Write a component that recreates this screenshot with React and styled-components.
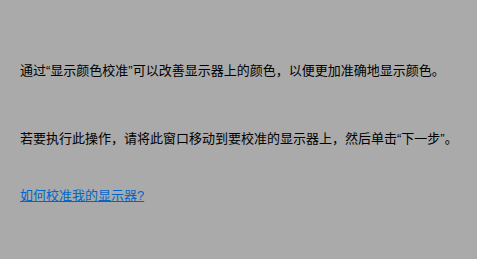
import React from 'react';
import styled, { createGlobalStyle } from 'styled-components';

const GlobalStyle = createGlobalStyle`
  html, body {
    margin: 0;
    padding: 0;
    background: #aaaaaa;
  }
`;

const Page = styled.div`
  width: 477px;
  height: 259px;
  box-sizing: border-box;
  padding: 62px 20px 0 20px;
  background: #aaaaaa;
  display: flex;
  flex-direction: column;
  font-family: "Liberation Sans", "Noto Sans CJK SC", sans-serif;
  font-size: 13px;
  line-height: 18px;
  color: #000;
`;

const Para = styled.p`
  margin: ${(p) => p.$top || 0}px 0 0 0;
  white-space: nowrap;
`;

const HelpLink = styled.a`
  margin-top: ${(p) => p.$top || 0}px;
  align-self: flex-start;
  color: #0066cc;
  text-decoration: underline;
  cursor: pointer;
`;

export default function App() {
  return (
    <>
      <GlobalStyle />
      <Page>
        <Para>通过“显示颜色校准”可以改善显示器上的颜色，以便更加准确地显示颜色。</Para>
        <Para $top={50}>若要执行此操作，请将此窗口移动到要校准的显示器上，然后单击“下一步”。</Para>
        <HelpLink $top={39} href="#">如何校准我的显示器?</HelpLink>
      </Page>
    </>
  );
}
